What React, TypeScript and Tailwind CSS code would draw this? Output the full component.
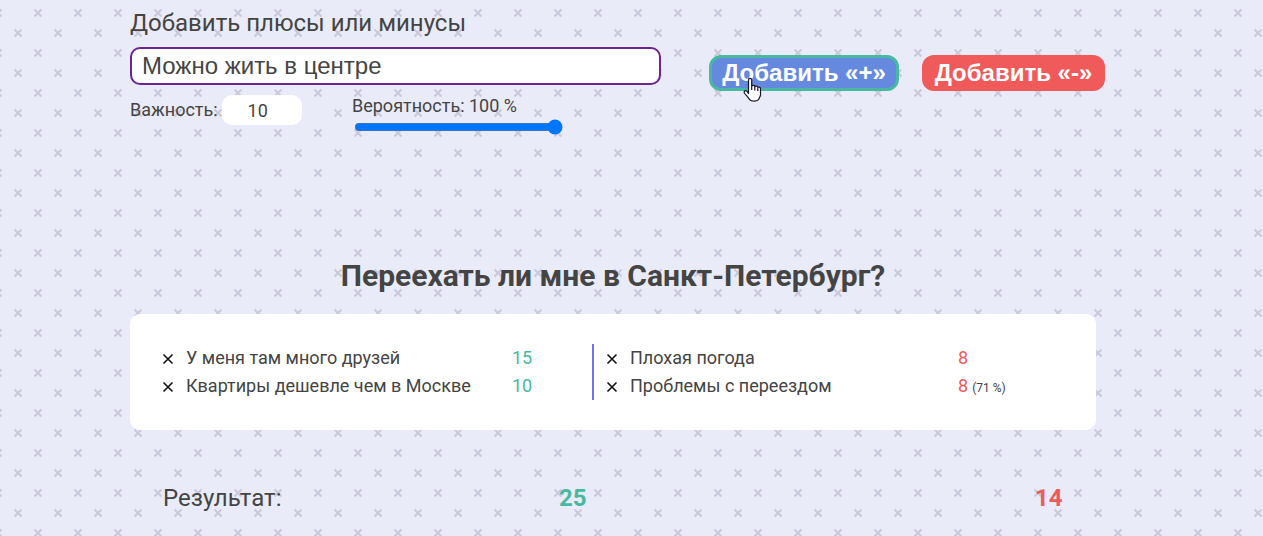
import { useState } from "react";

type Item = { text: string; value: number; probability?: number };

const pros: Item[] = [
  { text: "У меня там много друзей", value: 15 },
  { text: "Квартиры дешевле чем в Москве", value: 10 },
];

const cons: Item[] = [
  { text: "Плохая погода", value: 8 },
  { text: "Проблемы с переездом", value: 8, probability: 71 },
];

function Backdrop() {
  return (
    <svg className="absolute inset-0 -z-10 h-full w-full" aria-hidden="true">
      <defs>
        <pattern id="crosses" width="40" height="40" patternUnits="userSpaceOnUse">
          <path
            d="M34.5 9.5l7 7M41.5 9.5l-7 7M-5.5 9.5l7 7M1.5 9.5l-7 7M14.5 29.5l7 7M21.5 29.5l-7 7"
            stroke="#ccc8dc"
            strokeWidth="2"
            fill="none"
          />
        </pattern>
      </defs>
      <rect width="100%" height="100%" fill="url(#crosses)" />
    </svg>
  );
}

function Hand() {
  return (
    <svg
      className="pointer-events-none absolute left-[34px] top-[22px] h-[26px] w-[19px]"
      viewBox="0 0 19 26"
      aria-hidden="true"
    >
      <path
        d="M5.5 16.5V3a1.6 1.6 0 0 1 3.2 0v6.2c.3-1.2 3-1.1 3.1.5.5-1 2.8-.8 3 .8.6-.8 2.7-.5 2.7 1.2v5.8c0 2.4-1.7 3.600-2 5.200-1.600 2-7.400 2-8.800 0-1-2.100-3.400-4.100-5-6.200-1.500-2 .9-3.800 2.300-2.200z"
        fill="#fff"
        stroke="#15152a"
        strokeWidth="1.2"
        strokeLinejoin="round"
      />
      <path d="M8.700 9v4M11.800 10v3.500M14.800 11v3" stroke="#15152a" strokeWidth="1.200" fill="none" />
    </svg>
  );
}

function ItemList({ items, kind }: { items: Item[]; kind: "plus" | "minus" }) {
  return (
    <ul className={kind === "plus" ? "min-w-0" : "min-w-0 border-l-2 border-[#7272f5] pl-3"}>
      {items.map((item) => (
        <li key={item.text} className="flex h-7 items-center">
          <button type="button" aria-label={`Удалить: ${item.text}`} className="mr-3 flex w-3 shrink-0 pt-[2px]">
            <svg className="size-3" viewBox="0 0 12 12" aria-hidden="true">
              <path d="M1.500 1.500l9 9M10.500 1.500l-9 9" stroke="#111" strokeWidth="1.600" />
            </svg>
          </button>
          <span className="flex-1">{item.text}</span>
          <span className={kind === "plus" ? "w-20 text-[#48b9a0]" : "w-[106px] text-[#ef5b5b]"}>
            {item.value}
            {item.probability !== undefined && (
              <small className="ml-1 text-xs text-[#444]">({item.probability} %)</small>
            )}
          </span>
        </li>
      ))}
    </ul>
  );
}

export default function App() {
  const [text, setText] = useState("Можно жить в центре");
  const [weight, setWeight] = useState("10");
  const [chance, setChance] = useState(100);

  return (
    <main className="relative isolate min-h-screen overflow-hidden bg-[#e9ebf8] pl-[130px] pr-[158px] pt-2 font-[Roboto,sans-serif] text-lg leading-7 text-[#444]">
      <Backdrop />
      <form onSubmit={(e) => e.preventDefault()}>
        <label htmlFor="argument" className="block text-2xl leading-[30px]">
          Добавить плюсы или минусы
        </label>
        <div className="mt-[9px] flex items-start">
          <div className="mr-12 flex-1">
            <input
              id="argument"
              type="text"
              value={text}
              onChange={(e) => setText(e.target.value)}
              className="block h-[38px] w-full rounded-[10px] border-2 border-[#6b2490] bg-white px-[10px] font-['Liberation_Sans',Arial,sans-serif] text-2xl outline-none"
            />
            <div className="mt-2 flex items-start">
              <div className="mt-[2px] flex w-[222px] items-center gap-1">
                <label htmlFor="weight">Важность:</label>
                <input
                  id="weight"
                  type="text"
                  inputMode="numeric"
                  value={weight}
                  onChange={(e) => setWeight(e.target.value)}
                  className="h-[30px] w-20 rounded-[10px] bg-white pr-2 text-center outline-none"
                />
              </div>
              <div>
                <label htmlFor="chance" className="block leading-[26px]">
                  Вероятность: {chance} %
                </label>
                <input
                  id="chance"
                  type="range"
                  min="0"
                  max="100"
                  value={chance}
                  onChange={(e) => setChance(Number(e.target.value))}
                  className="ml-[2px] block h-4 w-[209px] accent-[#0075ff]"
                />
              </div>
            </div>
          </div>
          <div className="mt-2 flex gap-[23px] font-['Liberation_Sans',Arial,sans-serif] text-2xl font-bold text-white">
            <div className="relative">
              <button
                type="submit"
                className="flex h-9 w-[190px] items-center justify-center rounded-xl border-3 border-[#48b9a0] bg-[#6689e0]"
              >
                Добавить «+»
              </button>
              <Hand />
            </div>
            <button
              type="button"
              className="flex h-9 w-[183px] items-center justify-center rounded-xl bg-[#f05a5a]"
            >
              Добавить «-»
            </button>
          </div>
        </div>
      </form>

      <section className="mr-[9px] mt-[123px]">
        <h1 className="text-center text-3xl font-bold leading-9">Переехать ли мне в Санкт-Петербург?</h1>
        <div className="mt-5 grid grid-cols-[430fr_472fr] rounded-[10px] bg-white px-8 py-[30px]">
          <ItemList items={pros} kind="plus" />
          <ItemList items={cons} kind="minus" />
        </div>
        <div className="mt-[52px] grid grid-cols-[396fr_476fr_28px] px-[33px] text-2xl leading-8">
          <span>Результат:</span>
          <strong className="text-[#48b9a0]">25</strong>
          <strong className="text-[#ef5b5b]">14</strong>
        </div>
      </section>
    </main>
  );
}
